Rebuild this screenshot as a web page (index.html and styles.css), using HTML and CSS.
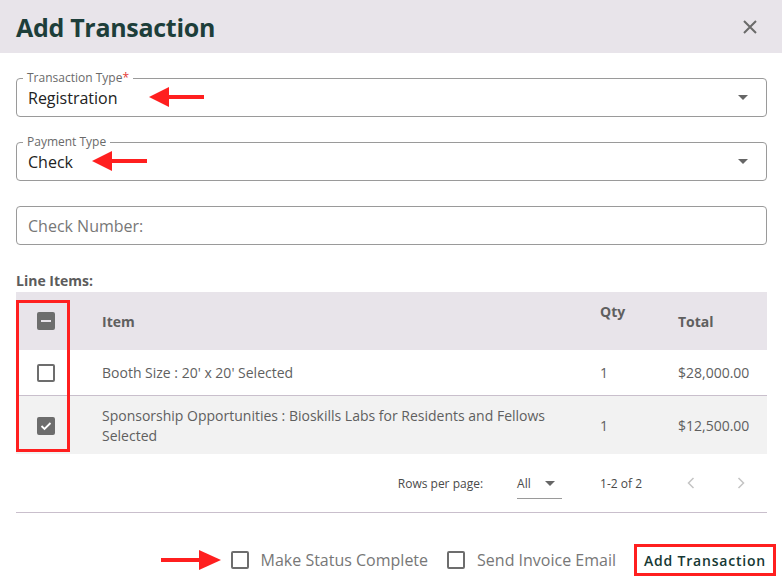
FILE: index.html
```html
<!DOCTYPE html>
<html lang="en">
<head>
<meta charset="utf-8">
<title>Add Transaction</title>
<link rel="stylesheet" href="styles.css">
</head>
<body>
<div class="dialog">
  <header class="dlg-head">
    <h1 class="dlg-title">Add Transaction</h1>
    <button class="close-btn" aria-label="Close">
      <svg width="14" height="14" viewBox="0 0 14 14"><path d="M1 1L13 13M13 1L1 13" stroke="#6a6a6a" stroke-width="2" fill="none"/></svg>
    </button>
  </header>

  <div class="dlg-body">
    <fieldset class="field field-first">
      <legend class="field-label">Transaction Type<span class="req">*</span></legend>
      <div class="field-row">
        <span class="field-value">Registration</span>
        <span class="caret"></span>
      </div>
      <svg class="arrow arrow-1" width="56" height="20" viewBox="0 0 56 20"><rect x="18" y="8" width="37" height="4" fill="#ff1f1f"/><polygon points="0,10 20,0 20,20" fill="#ff1f1f"/></svg>
    </fieldset>

    <fieldset class="field">
      <legend class="field-label">Payment Type</legend>
      <div class="field-row">
        <span class="field-value">Check</span>
        <span class="caret"></span>
      </div>
      <svg class="arrow arrow-2" width="56" height="20" viewBox="0 0 56 20"><rect x="18" y="8" width="37" height="4" fill="#ff1f1f"/><polygon points="0,10 20,0 20,20" fill="#ff1f1f"/></svg>
    </fieldset>

    <div class="text-input">Check Number:</div>

    <div class="section-label">Line Items:</div>

    <div class="table">
      <div class="t-row t-head">
        <div class="t-cell t-check"><span class="cb cb-ind"></span></div>
        <div class="t-cell t-item">Item</div>
        <div class="t-cell t-qty t-qty-head">Qty</div>
        <div class="t-cell t-total">Total</div>
      </div>
      <div class="t-row t-body">
        <div class="t-cell t-check"><span class="cb"></span></div>
        <div class="t-cell t-item">Booth Size : 20' x 20' Selected</div>
        <div class="t-cell t-qty">1</div>
        <div class="t-cell t-total">$28,000.00</div>
      </div>
      <div class="t-row t-body t-alt">
        <div class="t-cell t-check"><span class="cb cb-on"><svg width="12" height="10" viewBox="0 0 12 10"><path d="M1.5 5L4.5 8L10.5 2" stroke="#fff" stroke-width="1.8" fill="none"/></svg></span></div>
        <div class="t-cell t-item">Sponsorship Opportunities : Bioskills Labs for Residents and Fellows Selected</div>
        <div class="t-cell t-qty">1</div>
        <div class="t-cell t-total">$12,500.00</div>
      </div>
      <div class="highlight-col"></div>
    </div>

    <div class="pager">
      <span class="pager-label">Rows per page:</span>
      <span class="pager-select"><span>All</span><span class="caret"></span></span>
      <span class="pager-range">1-2 of 2</span>
      <span class="pager-nav">
        <svg width="8" height="12" viewBox="0 0 8 12"><path d="M6.5 1L1.5 6L6.5 11" stroke="#c4c4c4" stroke-width="1.5" fill="none"/></svg>
      </span>
      <span class="pager-nav pager-next">
        <svg width="8" height="12" viewBox="0 0 8 12"><path d="M1.5 1L6.5 6L1.5 11" stroke="#c4c4c4" stroke-width="1.5" fill="none"/></svg>
      </span>
    </div>

    <div class="divider"></div>
  </div>

  <footer class="dlg-foot">
    <svg class="arrow arrow-3" width="60" height="20" viewBox="0 0 60 20"><rect x="0" y="8" width="40" height="4" fill="#ff1f1f"/><polygon points="60,10 38,0 38,20" fill="#ff1f1f"/></svg>
    <label class="check-opt"><span class="cb cb-lg"></span><span>Make Status Complete</span></label>
    <label class="check-opt"><span class="cb cb-lg"></span><span>Send Invoice Email</span></label>
    <button class="submit-btn">Add Transaction</button>
  </footer>
</div>
</body>
</html>
```

FILE: styles.css
```css
* { box-sizing: border-box; }

body {
  margin: 0;
  background: #fff;
  font-family: "Open Sans", "Noto Sans", sans-serif;
  color: #5c5c5c;
}

.dialog {
  width: 782px;
  height: 580px;
  position: relative;
  overflow: hidden;
}

.dlg-head {
  height: 53px;
  background: #e8e4ea;
  display: flex;
  align-items: center;
  justify-content: space-between;
  padding: 0 25px 0 16px;
}

.dlg-title {
  margin: 0;
  font-size: 25px;
  font-weight: 700;
  color: #1d3e3a;
  letter-spacing: -0.3px;
}

.close-btn {
  border: 0;
  background: none;
  padding: 0;
  width: 14px;
  height: 14px;
  display: flex;
}

.dlg-body {
  padding: 0 15px 0 16px;
}

.field {
  position: relative;
  margin: 18px 0 0;
  padding: 0 11px 7px;
  border: 1px solid #9a9a9a;
  border-radius: 4px;
  min-width: 0;
}

.field-label {
  margin-left: -5px;
  padding: 0 4px;
  font-size: 12px;
  line-height: 14px;
  color: #6a6a6a;
}

.req { color: #e53935; }

.field-row {
  display: flex;
  align-items: center;
  justify-content: space-between;
  height: 24px;
  padding-top: 1px;
}

.field-value {
  font-size: 16px;
  color: #222;
}

.caret {
  width: 0;
  height: 0;
  border-left: 5px solid transparent;
  border-right: 5px solid transparent;
  border-top: 5px solid #666;
  margin-right: 7px;
}

.arrow { position: absolute; }
.arrow-1 { left: 132px; top: 2px; }
.arrow-2 { left: 75px; top: 2px; }
.arrow-3 { left: 161px; top: 6px; }

.text-input {
  margin-top: 25px;
  height: 39px;
  border: 1px solid #9a9a9a;
  border-radius: 4px;
  padding-left: 11px;
  display: flex;
  align-items: center;
  font-size: 16px;
  color: #777;
}

.section-label {
  margin-top: 26px;
  font-size: 14px;
  line-height: 19px;
  font-weight: 700;
  color: #5c5c5c;
}

.table {
  margin-top: 2px;
  position: relative;
}

.t-row {
  display: grid;
  grid-template-columns: 86px 498px 78px 89px;
  align-items: center;
  font-size: 14px;
  color: #5f5f5f;
}

.t-head {
  height: 58px;
  background: #e8e4ea;
  font-weight: 700;
}

.t-body { min-height: 45px; background: #fff; }
.t-alt {
  min-height: 59px;
  background: #f2f2f2;
  border-top: 1px solid #c9bfcc;
  line-height: 20px;
  padding-top: 2px;
}

.t-check { padding-left: 21px; display: flex; }
.t-item { padding-right: 22px; }
.t-qty-head { align-self: start; padding-top: 10px; }

.cb {
  width: 18px;
  height: 18px;
  border: 2px solid #6d6d6d;
  border-radius: 2px;
  display: inline-flex;
  align-items: center;
  justify-content: center;
  flex-shrink: 0;
}

.cb-ind {
  background: #6d6d6d;
  position: relative;
}
.cb-ind::after {
  content: "";
  width: 10px;
  height: 2px;
  background: #e8e4ea;
}

.cb-on { background: #6d6d6d; }

.highlight-col {
  position: absolute;
  left: 0;
  top: 8px;
  width: 54px;
  height: 152px;
  border: 3px solid #ff1f1f;
}

.pager {
  height: 58px;
  display: flex;
  align-items: center;
  justify-content: flex-end;
  font-size: 12px;
  color: #4a4a4a;
  padding-right: 21px;
}

.pager-label { margin-right: 34px; }

.pager-select {
  display: flex;
  align-items: center;
  gap: 14px;
  width: 45px;
  height: 30px;
  border-bottom: 1px solid #9a9a9a;
  margin-top: 1px;
}
.pager-select .caret { margin-right: 0; }

.pager-range { margin-left: 38px; margin-right: 44px; }

.pager-nav {
  display: flex;
  width: 10px;
  justify-content: center;
}
.pager-next { margin-left: 40px; }

.divider {
  height: 1px;
  background: #c9bfcc;
}

.dlg-foot {
  position: relative;
  margin-top: 31px;
  height: 32px;
  display: flex;
  align-items: center;
  justify-content: flex-end;
  padding-right: 6px;
}

.check-opt {
  display: flex;
  align-items: center;
  gap: 12px;
  font-size: 16px;
  color: #777;
  margin-right: 19px;
}
.check-opt + .check-opt { margin-right: 18px; }

.submit-btn {
  height: 32px;
  width: 142px;
  border: 3px solid #ff1f1f;
  background: #fff;
  font-family: "Open Sans", "Noto Sans", sans-serif;
  font-size: 14px;
  font-weight: 600;
  letter-spacing: 0.8px;
  color: #163833;
  padding: 0;
}
```
